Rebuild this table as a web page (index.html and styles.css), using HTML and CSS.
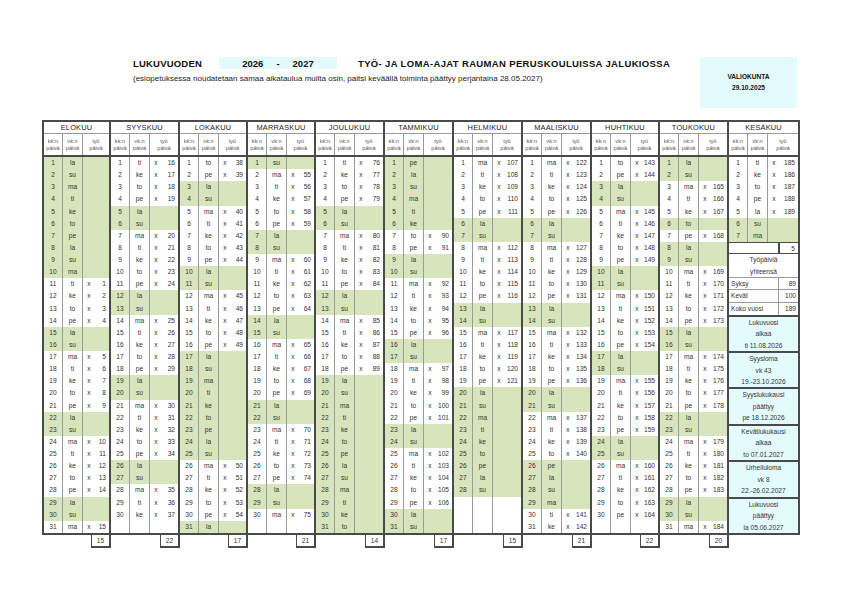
FILE: index.html
```html
<!DOCTYPE html>
<html lang="fi">
<head>
<meta charset="utf-8">
<title>Lukuvuosi 2026-2027</title>
<link rel="stylesheet" href="styles.css">
</head>
<body>
<div class="page">
  <div class="top">
    <div class="titles">
      <div class="l1">
        <span class="lbl">LUKUVUODEN</span>
        <span class="years"><span>2026</span><span>-</span><span>2027</span></span>
        <span class="ttl">TYÖ- JA LOMA-AJAT RAUMAN PERUSKOULUISSA JALUKIOSSA</span>
      </div>
      <div class="sub">(esiopetuksessa noudatetaan samaa aikataulua muilta osin, paitsi keväällä toiminta päättyy perjantaina 28.05.2027)</div>
    </div>
    <div class="valio"><span>VALIOKUNTA</span><span>29.10.2025</span></div>
  </div>

  <div class="cal">
    <!-- ELOKUU -->
    <div class="m"><div class="mi">
      <div class="mh">ELOKUU</div>
      <div class="sh"><i>kk:n<br>päivä</i><i>vk:n<br>päivä</i><i>työ<br>päivä</i></div>
      <div class="r g"><i>1</i><i>la</i></div>
      <div class="r g"><i>2</i><i>su</i></div>
      <div class="r g"><i>3</i><i>ma</i></div>
      <div class="r g"><i>4</i><i>ti</i></div>
      <div class="r g"><i>5</i><i>ke</i></div>
      <div class="r g"><i>6</i><i>to</i></div>
      <div class="r g"><i>7</i><i>pe</i></div>
      <div class="r g"><i>8</i><i>la</i></div>
      <div class="r g"><i>9</i><i>su</i></div>
      <div class="r g"><i>10</i><i>ma</i></div>
      <div class="r"><i>11</i><i>ti</i><i>x</i><i>1</i></div>
      <div class="r"><i>12</i><i>ke</i><i>x</i><i>2</i></div>
      <div class="r"><i>13</i><i>to</i><i>x</i><i>3</i></div>
      <div class="r"><i>14</i><i>pe</i><i>x</i><i>4</i></div>
      <div class="r g"><i>15</i><i>la</i></div>
      <div class="r g"><i>16</i><i>su</i></div>
      <div class="r"><i>17</i><i>ma</i><i>x</i><i>5</i></div>
      <div class="r"><i>18</i><i>ti</i><i>x</i><i>6</i></div>
      <div class="r"><i>19</i><i>ke</i><i>x</i><i>7</i></div>
      <div class="r"><i>20</i><i>to</i><i>x</i><i>8</i></div>
      <div class="r"><i>21</i><i>pe</i><i>x</i><i>9</i></div>
      <div class="r g"><i>22</i><i>la</i></div>
      <div class="r g"><i>23</i><i>su</i></div>
      <div class="r"><i>24</i><i>ma</i><i>x</i><i>10</i></div>
      <div class="r"><i>25</i><i>ti</i><i>x</i><i>11</i></div>
      <div class="r"><i>26</i><i>ke</i><i>x</i><i>12</i></div>
      <div class="r"><i>27</i><i>to</i><i>x</i><i>13</i></div>
      <div class="r"><i>28</i><i>pe</i><i>x</i><i>14</i></div>
      <div class="r g"><i>29</i><i>la</i></div>
      <div class="r g"><i>30</i><i>su</i></div>
      <div class="r"><i>31</i><i>ma</i><i>x</i><i>15</i></div>
    </div><div class="tot">15</div></div>

    <!-- SYYSKUU -->
    <div class="m"><div class="mi">
      <div class="mh">SYYSKUU</div>
      <div class="sh"><i>kk:n<br>päivä</i><i>vk:n<br>päivä</i><i>työ<br>päivä</i></div>
      <div class="r"><i>1</i><i>ti</i><i>x</i><i>16</i></div>
      <div class="r"><i>2</i><i>ke</i><i>x</i><i>17</i></div>
      <div class="r"><i>3</i><i>to</i><i>x</i><i>18</i></div>
      <div class="r"><i>4</i><i>pe</i><i>x</i><i>19</i></div>
      <div class="r g"><i>5</i><i>la</i></div>
      <div class="r g"><i>6</i><i>su</i></div>
      <div class="r"><i>7</i><i>ma</i><i>x</i><i>20</i></div>
      <div class="r"><i>8</i><i>ti</i><i>x</i><i>21</i></div>
      <div class="r"><i>9</i><i>ke</i><i>x</i><i>22</i></div>
      <div class="r"><i>10</i><i>to</i><i>x</i><i>23</i></div>
      <div class="r"><i>11</i><i>pe</i><i>x</i><i>24</i></div>
      <div class="r g"><i>12</i><i>la</i></div>
      <div class="r g"><i>13</i><i>su</i></div>
      <div class="r"><i>14</i><i>ma</i><i>x</i><i>25</i></div>
      <div class="r"><i>15</i><i>ti</i><i>x</i><i>26</i></div>
      <div class="r"><i>16</i><i>ke</i><i>x</i><i>27</i></div>
      <div class="r"><i>17</i><i>to</i><i>x</i><i>28</i></div>
      <div class="r"><i>18</i><i>pe</i><i>x</i><i>29</i></div>
      <div class="r g"><i>19</i><i>la</i></div>
      <div class="r g"><i>20</i><i>su</i></div>
      <div class="r"><i>21</i><i>ma</i><i>x</i><i>30</i></div>
      <div class="r"><i>22</i><i>ti</i><i>x</i><i>31</i></div>
      <div class="r"><i>23</i><i>ke</i><i>x</i><i>32</i></div>
      <div class="r"><i>24</i><i>to</i><i>x</i><i>33</i></div>
      <div class="r"><i>25</i><i>pe</i><i>x</i><i>34</i></div>
      <div class="r g"><i>26</i><i>la</i></div>
      <div class="r g"><i>27</i><i>su</i></div>
      <div class="r"><i>28</i><i>ma</i><i>x</i><i>35</i></div>
      <div class="r"><i>29</i><i>ti</i><i>x</i><i>36</i></div>
      <div class="r"><i>30</i><i>ke</i><i>x</i><i>37</i></div>
      <div class="r"><i></i><i></i></div>
    </div><div class="tot">22</div></div>

    <!-- LOKAKUU -->
    <div class="m"><div class="mi">
      <div class="mh">LOKAKUU</div>
      <div class="sh"><i>kk:n<br>päivä</i><i>vk:n<br>päivä</i><i>työ<br>päivä</i></div>
      <div class="r"><i>1</i><i>to</i><i>x</i><i>38</i></div>
      <div class="r"><i>2</i><i>pe</i><i>x</i><i>39</i></div>
      <div class="r g"><i>3</i><i>la</i></div>
      <div class="r g"><i>4</i><i>su</i></div>
      <div class="r"><i>5</i><i>ma</i><i>x</i><i>40</i></div>
      <div class="r"><i>6</i><i>ti</i><i>x</i><i>41</i></div>
      <div class="r"><i>7</i><i>ke</i><i>x</i><i>42</i></div>
      <div class="r"><i>8</i><i>to</i><i>x</i><i>43</i></div>
      <div class="r"><i>9</i><i>pe</i><i>x</i><i>44</i></div>
      <div class="r g"><i>10</i><i>la</i></div>
      <div class="r g"><i>11</i><i>su</i></div>
      <div class="r"><i>12</i><i>ma</i><i>x</i><i>45</i></div>
      <div class="r"><i>13</i><i>ti</i><i>x</i><i>46</i></div>
      <div class="r"><i>14</i><i>ke</i><i>x</i><i>47</i></div>
      <div class="r"><i>15</i><i>to</i><i>x</i><i>48</i></div>
      <div class="r"><i>16</i><i>pe</i><i>x</i><i>49</i></div>
      <div class="r g"><i>17</i><i>la</i></div>
      <div class="r g"><i>18</i><i>su</i></div>
      <div class="r g"><i>19</i><i>ma</i></div>
      <div class="r g"><i>20</i><i>ti</i></div>
      <div class="r g"><i>21</i><i>ke</i></div>
      <div class="r g"><i>22</i><i>to</i></div>
      <div class="r g"><i>23</i><i>pe</i></div>
      <div class="r g"><i>24</i><i>la</i></div>
      <div class="r g"><i>25</i><i>su</i></div>
      <div class="r"><i>26</i><i>ma</i><i>x</i><i>50</i></div>
      <div class="r"><i>27</i><i>ti</i><i>x</i><i>51</i></div>
      <div class="r"><i>28</i><i>ke</i><i>x</i><i>52</i></div>
      <div class="r"><i>29</i><i>to</i><i>x</i><i>53</i></div>
      <div class="r"><i>30</i><i>pe</i><i>x</i><i>54</i></div>
      <div class="r g"><i>31</i><i>la</i></div>
    </div><div class="tot">17</div></div>

    <!-- MARRASKUU -->
    <div class="m"><div class="mi">
      <div class="mh">MARRASKUU</div>
      <div class="sh"><i>kk:n<br>päivä</i><i>vk:n<br>päivä</i><i>työ<br>päivä</i></div>
      <div class="r g"><i>1</i><i>su</i></div>
      <div class="r"><i>2</i><i>ma</i><i>x</i><i>55</i></div>
      <div class="r"><i>3</i><i>ti</i><i>x</i><i>56</i></div>
      <div class="r"><i>4</i><i>ke</i><i>x</i><i>57</i></div>
      <div class="r"><i>5</i><i>to</i><i>x</i><i>58</i></div>
      <div class="r"><i>6</i><i>pe</i><i>x</i><i>59</i></div>
      <div class="r g"><i>7</i><i>la</i></div>
      <div class="r g"><i>8</i><i>su</i></div>
      <div class="r"><i>9</i><i>ma</i><i>x</i><i>60</i></div>
      <div class="r"><i>10</i><i>ti</i><i>x</i><i>61</i></div>
      <div class="r"><i>11</i><i>ke</i><i>x</i><i>62</i></div>
      <div class="r"><i>12</i><i>to</i><i>x</i><i>63</i></div>
      <div class="r"><i>13</i><i>pe</i><i>x</i><i>64</i></div>
      <div class="r g"><i>14</i><i>la</i></div>
      <div class="r g"><i>15</i><i>su</i></div>
      <div class="r"><i>16</i><i>ma</i><i>x</i><i>65</i></div>
      <div class="r"><i>17</i><i>ti</i><i>x</i><i>66</i></div>
      <div class="r"><i>18</i><i>ke</i><i>x</i><i>67</i></div>
      <div class="r"><i>19</i><i>to</i><i>x</i><i>68</i></div>
      <div class="r"><i>20</i><i>pe</i><i>x</i><i>69</i></div>
      <div class="r g"><i>21</i><i>la</i></div>
      <div class="r g"><i>22</i><i>su</i></div>
      <div class="r"><i>23</i><i>ma</i><i>x</i><i>70</i></div>
      <div class="r"><i>24</i><i>ti</i><i>x</i><i>71</i></div>
      <div class="r"><i>25</i><i>ke</i><i>x</i><i>72</i></div>
      <div class="r"><i>26</i><i>to</i><i>x</i><i>73</i></div>
      <div class="r"><i>27</i><i>pe</i><i>x</i><i>74</i></div>
      <div class="r g"><i>28</i><i>la</i></div>
      <div class="r g"><i>29</i><i>su</i></div>
      <div class="r"><i>30</i><i>ma</i><i>x</i><i>75</i></div>
      <div class="r"><i></i><i></i></div>
    </div><div class="tot">21</div></div>

    <!-- JOULUKUU -->
    <div class="m"><div class="mi">
      <div class="mh">JOULUKUU</div>
      <div class="sh"><i>kk:n<br>päivä</i><i>vk:n<br>päivä</i><i>työ<br>päivä</i></div>
      <div class="r"><i>1</i><i>ti</i><i>x</i><i>76</i></div>
      <div class="r"><i>2</i><i>ke</i><i>x</i><i>77</i></div>
      <div class="r"><i>3</i><i>to</i><i>x</i><i>78</i></div>
      <div class="r"><i>4</i><i>pe</i><i>x</i><i>79</i></div>
      <div class="r g"><i>5</i><i>la</i></div>
      <div class="r g"><i>6</i><i>su</i></div>
      <div class="r"><i>7</i><i>ma</i><i>x</i><i>80</i></div>
      <div class="r"><i>8</i><i>ti</i><i>x</i><i>81</i></div>
      <div class="r"><i>9</i><i>ke</i><i>x</i><i>82</i></div>
      <div class="r"><i>10</i><i>to</i><i>x</i><i>83</i></div>
      <div class="r"><i>11</i><i>pe</i><i>x</i><i>84</i></div>
      <div class="r g"><i>12</i><i>la</i></div>
      <div class="r g"><i>13</i><i>su</i></div>
      <div class="r"><i>14</i><i>ma</i><i>x</i><i>85</i></div>
      <div class="r"><i>15</i><i>ti</i><i>x</i><i>86</i></div>
      <div class="r"><i>16</i><i>ke</i><i>x</i><i>87</i></div>
      <div class="r"><i>17</i><i>to</i><i>x</i><i>88</i></div>
      <div class="r"><i>18</i><i>pe</i><i>x</i><i>89</i></div>
      <div class="r g"><i>19</i><i>la</i></div>
      <div class="r g"><i>20</i><i>su</i></div>
      <div class="r g"><i>21</i><i>ma</i></div>
      <div class="r g"><i>22</i><i>ti</i></div>
      <div class="r g"><i>23</i><i>ke</i></div>
      <div class="r g"><i>24</i><i>to</i></div>
      <div class="r g"><i>25</i><i>pe</i></div>
      <div class="r g"><i>26</i><i>la</i></div>
      <div class="r g"><i>27</i><i>su</i></div>
      <div class="r g"><i>28</i><i>ma</i></div>
      <div class="r g"><i>29</i><i>ti</i></div>
      <div class="r g"><i>30</i><i>ke</i></div>
      <div class="r g"><i>31</i><i>to</i></div>
    </div><div class="tot">14</div></div>

    <!-- TAMMIKUU -->
    <div class="m"><div class="mi">
      <div class="mh">TAMMIKUU</div>
      <div class="sh"><i>kk:n<br>päivä</i><i>vk:n<br>päivä</i><i>työ<br>päivä</i></div>
      <div class="r g"><i>1</i><i>pe</i></div>
      <div class="r g"><i>2</i><i>la</i></div>
      <div class="r g"><i>3</i><i>su</i></div>
      <div class="r g"><i>4</i><i>ma</i></div>
      <div class="r g"><i>5</i><i>ti</i></div>
      <div class="r g"><i>6</i><i>ke</i></div>
      <div class="r"><i>7</i><i>to</i><i>x</i><i>90</i></div>
      <div class="r"><i>8</i><i>pe</i><i>x</i><i>91</i></div>
      <div class="r g"><i>9</i><i>la</i></div>
      <div class="r g"><i>10</i><i>su</i></div>
      <div class="r"><i>11</i><i>ma</i><i>x</i><i>92</i></div>
      <div class="r"><i>12</i><i>ti</i><i>x</i><i>93</i></div>
      <div class="r"><i>13</i><i>ke</i><i>x</i><i>94</i></div>
      <div class="r"><i>14</i><i>to</i><i>x</i><i>95</i></div>
      <div class="r"><i>15</i><i>pe</i><i>x</i><i>96</i></div>
      <div class="r g"><i>16</i><i>la</i></div>
      <div class="r g"><i>17</i><i>su</i></div>
      <div class="r"><i>18</i><i>ma</i><i>x</i><i>97</i></div>
      <div class="r"><i>19</i><i>ti</i><i>x</i><i>98</i></div>
      <div class="r"><i>20</i><i>ke</i><i>x</i><i>99</i></div>
      <div class="r"><i>21</i><i>to</i><i>x</i><i>100</i></div>
      <div class="r"><i>22</i><i>pe</i><i>x</i><i>101</i></div>
      <div class="r g"><i>23</i><i>la</i></div>
      <div class="r g"><i>24</i><i>su</i></div>
      <div class="r"><i>25</i><i>ma</i><i>x</i><i>102</i></div>
      <div class="r"><i>26</i><i>ti</i><i>x</i><i>103</i></div>
      <div class="r"><i>27</i><i>ke</i><i>x</i><i>104</i></div>
      <div class="r"><i>28</i><i>to</i><i>x</i><i>105</i></div>
      <div class="r"><i>29</i><i>pe</i><i>x</i><i>106</i></div>
      <div class="r g"><i>30</i><i>la</i></div>
      <div class="r g"><i>31</i><i>su</i></div>
    </div><div class="tot">17</div></div>

    <!-- HELMIKUU -->
    <div class="m"><div class="mi">
      <div class="mh">HELMIKUU</div>
      <div class="sh"><i>kk:n<br>päivä</i><i>vk:n<br>päivä</i><i>työ<br>päivä</i></div>
      <div class="r"><i>1</i><i>ma</i><i>x</i><i>107</i></div>
      <div class="r"><i>2</i><i>ti</i><i>x</i><i>108</i></div>
      <div class="r"><i>3</i><i>ke</i><i>x</i><i>109</i></div>
      <div class="r"><i>4</i><i>to</i><i>x</i><i>110</i></div>
      <div class="r"><i>5</i><i>pe</i><i>x</i><i>111</i></div>
      <div class="r g"><i>6</i><i>la</i></div>
      <div class="r g"><i>7</i><i>su</i></div>
      <div class="r"><i>8</i><i>ma</i><i>x</i><i>112</i></div>
      <div class="r"><i>9</i><i>ti</i><i>x</i><i>113</i></div>
      <div class="r"><i>10</i><i>ke</i><i>x</i><i>114</i></div>
      <div class="r"><i>11</i><i>to</i><i>x</i><i>115</i></div>
      <div class="r"><i>12</i><i>pe</i><i>x</i><i>116</i></div>
      <div class="r g"><i>13</i><i>la</i></div>
      <div class="r g"><i>14</i><i>su</i></div>
      <div class="r"><i>15</i><i>ma</i><i>x</i><i>117</i></div>
      <div class="r"><i>16</i><i>ti</i><i>x</i><i>118</i></div>
      <div class="r"><i>17</i><i>ke</i><i>x</i><i>119</i></div>
      <div class="r"><i>18</i><i>to</i><i>x</i><i>120</i></div>
      <div class="r"><i>19</i><i>pe</i><i>x</i><i>121</i></div>
      <div class="r g"><i>20</i><i>la</i></div>
      <div class="r g"><i>21</i><i>su</i></div>
      <div class="r g"><i>22</i><i>ma</i></div>
      <div class="r g"><i>23</i><i>ti</i></div>
      <div class="r g"><i>24</i><i>ke</i></div>
      <div class="r g"><i>25</i><i>to</i></div>
      <div class="r g"><i>26</i><i>pe</i></div>
      <div class="r g"><i>27</i><i>la</i></div>
      <div class="r g"><i>28</i><i>su</i></div>
      <div class="r"><i></i><i></i></div>
      <div class="r"><i></i><i></i></div>
      <div class="r"><i></i><i></i></div>
    </div><div class="tot">15</div></div>

    <!-- MAALISKUU -->
    <div class="m"><div class="mi">
      <div class="mh">MAALISKUU</div>
      <div class="sh"><i>kk:n<br>päivä</i><i>vk:n<br>päivä</i><i>työ<br>päivä</i></div>
      <div class="r"><i>1</i><i>ma</i><i>x</i><i>122</i></div>
      <div class="r"><i>2</i><i>ti</i><i>x</i><i>123</i></div>
      <div class="r"><i>3</i><i>ke</i><i>x</i><i>124</i></div>
      <div class="r"><i>4</i><i>to</i><i>x</i><i>125</i></div>
      <div class="r"><i>5</i><i>pe</i><i>x</i><i>126</i></div>
      <div class="r g"><i>6</i><i>la</i></div>
      <div class="r g"><i>7</i><i>su</i></div>
      <div class="r"><i>8</i><i>ma</i><i>x</i><i>127</i></div>
      <div class="r"><i>9</i><i>ti</i><i>x</i><i>128</i></div>
      <div class="r"><i>10</i><i>ke</i><i>x</i><i>129</i></div>
      <div class="r"><i>11</i><i>to</i><i>x</i><i>130</i></div>
      <div class="r"><i>12</i><i>pe</i><i>x</i><i>131</i></div>
      <div class="r g"><i>13</i><i>la</i></div>
      <div class="r g"><i>14</i><i>su</i></div>
      <div class="r"><i>15</i><i>ma</i><i>x</i><i>132</i></div>
      <div class="r"><i>16</i><i>ti</i><i>x</i><i>133</i></div>
      <div class="r"><i>17</i><i>ke</i><i>x</i><i>134</i></div>
      <div class="r"><i>18</i><i>to</i><i>x</i><i>135</i></div>
      <div class="r"><i>19</i><i>pe</i><i>x</i><i>136</i></div>
      <div class="r g"><i>20</i><i>la</i></div>
      <div class="r g"><i>21</i><i>su</i></div>
      <div class="r"><i>22</i><i>ma</i><i>x</i><i>137</i></div>
      <div class="r"><i>23</i><i>ti</i><i>x</i><i>138</i></div>
      <div class="r"><i>24</i><i>ke</i><i>x</i><i>139</i></div>
      <div class="r"><i>25</i><i>to</i><i>x</i><i>140</i></div>
      <div class="r g"><i>26</i><i>pe</i></div>
      <div class="r g"><i>27</i><i>la</i></div>
      <div class="r g"><i>28</i><i>su</i></div>
      <div class="r g"><i>29</i><i>ma</i></div>
      <div class="r"><i>30</i><i>ti</i><i>x</i><i>141</i></div>
      <div class="r"><i>31</i><i>ke</i><i>x</i><i>142</i></div>
    </div><div class="tot">21</div></div>

    <!-- HUHTIKUU -->
    <div class="m"><div class="mi">
      <div class="mh">HUHTIKUU</div>
      <div class="sh"><i>kk:n<br>päivä</i><i>vk:n<br>päivä</i><i>työ<br>päivä</i></div>
      <div class="r"><i>1</i><i>to</i><i>x</i><i>143</i></div>
      <div class="r"><i>2</i><i>pe</i><i>x</i><i>144</i></div>
      <div class="r g"><i>3</i><i>la</i></div>
      <div class="r g"><i>4</i><i>su</i></div>
      <div class="r"><i>5</i><i>ma</i><i>x</i><i>145</i></div>
      <div class="r"><i>6</i><i>ti</i><i>x</i><i>146</i></div>
      <div class="r"><i>7</i><i>ke</i><i>x</i><i>147</i></div>
      <div class="r"><i>8</i><i>to</i><i>x</i><i>148</i></div>
      <div class="r"><i>9</i><i>pe</i><i>x</i><i>149</i></div>
      <div class="r g"><i>10</i><i>la</i></div>
      <div class="r g"><i>11</i><i>su</i></div>
      <div class="r"><i>12</i><i>ma</i><i>x</i><i>150</i></div>
      <div class="r"><i>13</i><i>ti</i><i>x</i><i>151</i></div>
      <div class="r"><i>14</i><i>ke</i><i>x</i><i>152</i></div>
      <div class="r"><i>15</i><i>to</i><i>x</i><i>153</i></div>
      <div class="r"><i>16</i><i>pe</i><i>x</i><i>154</i></div>
      <div class="r g"><i>17</i><i>la</i></div>
      <div class="r g"><i>18</i><i>su</i></div>
      <div class="r"><i>19</i><i>ma</i><i>x</i><i>155</i></div>
      <div class="r"><i>20</i><i>ti</i><i>x</i><i>156</i></div>
      <div class="r"><i>21</i><i>ke</i><i>x</i><i>157</i></div>
      <div class="r"><i>22</i><i>to</i><i>x</i><i>158</i></div>
      <div class="r"><i>23</i><i>pe</i><i>x</i><i>159</i></div>
      <div class="r g"><i>24</i><i>la</i></div>
      <div class="r g"><i>25</i><i>su</i></div>
      <div class="r"><i>26</i><i>ma</i><i>x</i><i>160</i></div>
      <div class="r"><i>27</i><i>ti</i><i>x</i><i>161</i></div>
      <div class="r"><i>28</i><i>ke</i><i>x</i><i>162</i></div>
      <div class="r"><i>29</i><i>to</i><i>x</i><i>163</i></div>
      <div class="r"><i>30</i><i>pe</i><i>x</i><i>164</i></div>
      <div class="r"><i></i><i></i></div>
    </div><div class="tot">22</div></div>

    <!-- TOUKOKUU -->
    <div class="m"><div class="mi">
      <div class="mh">TOUKOKUU</div>
      <div class="sh"><i>kk:n<br>päivä</i><i>vk:n<br>päivä</i><i>työ<br>päivä</i></div>
      <div class="r g"><i>1</i><i>la</i></div>
      <div class="r g"><i>2</i><i>su</i></div>
      <div class="r"><i>3</i><i>ma</i><i>x</i><i>165</i></div>
      <div class="r"><i>4</i><i>ti</i><i>x</i><i>166</i></div>
      <div class="r"><i>5</i><i>ke</i><i>x</i><i>167</i></div>
      <div class="r g"><i>6</i><i>to</i></div>
      <div class="r"><i>7</i><i>pe</i><i>x</i><i>168</i></div>
      <div class="r g"><i>8</i><i>la</i></div>
      <div class="r g"><i>9</i><i>su</i></div>
      <div class="r"><i>10</i><i>ma</i><i>x</i><i>169</i></div>
      <div class="r"><i>11</i><i>ti</i><i>x</i><i>170</i></div>
      <div class="r"><i>12</i><i>ke</i><i>x</i><i>171</i></div>
      <div class="r"><i>13</i><i>to</i><i>x</i><i>172</i></div>
      <div class="r"><i>14</i><i>pe</i><i>x</i><i>173</i></div>
      <div class="r g"><i>15</i><i>la</i></div>
      <div class="r g"><i>16</i><i>su</i></div>
      <div class="r"><i>17</i><i>ma</i><i>x</i><i>174</i></div>
      <div class="r"><i>18</i><i>ti</i><i>x</i><i>175</i></div>
      <div class="r"><i>19</i><i>ke</i><i>x</i><i>176</i></div>
      <div class="r"><i>20</i><i>to</i><i>x</i><i>177</i></div>
      <div class="r"><i>21</i><i>pe</i><i>x</i><i>178</i></div>
      <div class="r g"><i>22</i><i>la</i></div>
      <div class="r g"><i>23</i><i>su</i></div>
      <div class="r"><i>24</i><i>ma</i><i>x</i><i>179</i></div>
      <div class="r"><i>25</i><i>ti</i><i>x</i><i>180</i></div>
      <div class="r"><i>26</i><i>ke</i><i>x</i><i>181</i></div>
      <div class="r"><i>27</i><i>to</i><i>x</i><i>182</i></div>
      <div class="r"><i>28</i><i>pe</i><i>x</i><i>183</i></div>
      <div class="r g"><i>29</i><i>la</i></div>
      <div class="r g"><i>30</i><i>su</i></div>
      <div class="r"><i>31</i><i>ma</i><i>x</i><i>184</i></div>
    </div><div class="tot">20</div></div>

    <!-- KESÄKUU -->
    <div class="m"><div class="mi">
      <div class="mh">KESÄKUU</div>
      <div class="sh"><i>kk:n<br>päivä</i><i>vk:n<br>päivä</i><i>työ<br>päivä</i></div>
      <div class="r"><i>1</i><i>ti</i><i>x</i><i>185</i></div>
      <div class="r"><i>2</i><i>ke</i><i>x</i><i>186</i></div>
      <div class="r"><i>3</i><i>to</i><i>x</i><i>187</i></div>
      <div class="r"><i>4</i><i>pe</i><i>x</i><i>188</i></div>
      <div class="r"><i>5</i><i>la</i><i>x</i><i>189</i></div>
      <div class="r g"><i>6</i><i>su</i></div>
      <div class="r g"><i>7</i><i>ma</i></div>
      <div class="sum"><span></span><span class="v">5</span></div>
      <div class="tp">Työpäiviä<br>yhteensä</div>
      <div class="kv"><span>Syksy</span><span class="v">89</span></div>
      <div class="kv"><span>Kevät</span><span class="v">100</span></div>
      <div class="kv last"><span>Koko vuosi</span><span class="v">189</span></div>
      <div class="info">Lukuvuosi<br>alkaa<br>ti 11.08.2026</div>
      <div class="info">Syysloma<br>vk 43<br>19.-23.10.2026</div>
      <div class="info">Syyslukukausi<br>päättyy<br>pe 18.12.2026</div>
      <div class="info">Kevätlukukausi<br>alkaa<br>to 07.01.2027</div>
      <div class="info">Urheiluloma<br>vk 8<br>22.-26.02.2027</div>
      <div class="info">Lukuvuosi<br>päättyy<br>la 05.06.2027</div>
    </div></div>
  </div>
</div>
</body>
</html>
```
FILE: styles.css
```css
* { box-sizing: border-box; }

body {
  margin: 0;
  background: #fff;
  color: #2a2a2a;
  font-family: "Liberation Sans", Arial, sans-serif;
}

.page {
  width: 800px;
  padding: 57px 0 0 42px;
}

/* ---------- heading ---------- */
.top {
  display: flex;
  height: 51px;
}

.titles {
  margin-left: 91px;
}

.l1 {
  display: flex;
  align-items: center;
  height: 12px;
  font-weight: bold;
  font-size: 9.5px;
  color: #111;
}

.lbl {
  width: 86px;
  letter-spacing: 0.2px;
}

.years {
  width: 118px;
  height: 12px;
  background: #e4fbfd;
  display: flex;
  justify-content: center;
  align-items: center;
  gap: 13px;
}

.ttl {
  margin-left: 21px;
  letter-spacing: 0.35px;
}

.sub {
  margin-top: 5px;
  font-size: 8px;
  color: #222;
}

.valio {
  margin-left: auto;
  margin-right: 3px;
  width: 97px;
  height: 51px;
  background: #e4fbfd;
  display: flex;
  flex-direction: column;
  justify-content: center;
  align-items: center;
  font-weight: bold;
  font-size: 6.6px;
  line-height: 11px;
  color: #111;
  padding-bottom: 2px;
}

/* ---------- calendar ---------- */
.cal {
  display: flex;
  margin-top: 12px;
}

.m {
  width: 69px;
  flex: none;
  display: flex;
  flex-direction: column;
}
.m:nth-child(3), .m:nth-child(4), .m:nth-child(9) { width: 68px; }
.m:last-child { width: 71px; }

.mi {
  border-top: 2px solid #4a4a4a;
  border-right: 2px solid #4a4a4a;
  border-bottom: 2px solid #4a4a4a;
}
.m:first-child .mi { border-left: 2px solid #4a4a4a; }

.mh {
  height: 12px;
  line-height: 11px;
  text-align: center;
  font-size: 7.4px;
  letter-spacing: 0.2px;
  border-bottom: 1px solid #9a9a9a;
  color: #222;
}

.sh {
  display: grid;
  grid-template-columns: 19px 20px 1fr;
  height: 23px;
  border-bottom: 2px solid #4a4a4a;
  font-size: 5.6px;
  line-height: 7px;
  color: #555;
}
.sh i {
  font-style: normal;
  display: flex;
  align-items: center;
  justify-content: center;
  text-align: center;
}
.sh i:nth-child(-n+2) { border-right: 1px solid #9a9a9a; }

.r {
  display: grid;
  grid-template-columns: 19px 20px 12px 1fr;
  height: 12.13px;
  line-height: 12px;
  font-size: 6.6px;
  color: #333;
}
.r i {
  font-style: normal;
  text-align: center;
  white-space: nowrap;
}
.r i:nth-child(-n+2) { border-right: 1px solid #9a9a9a; }
.r i:nth-child(4) {
  text-align: right;
  padding-right: 3px;
}
.g { background: #d8e4bc; }

.tot {
  align-self: flex-end;
  width: 20px;
  height: 13px;
  border-style: solid;
  border-color: #4a4a4a;
  border-width: 0 2px 2px 1px;
  font-size: 6.6px;
  line-height: 11px;
  text-align: center;
  color: #333;
}

/* ---------- summary panel ---------- */
.sum, .kv {
  display: grid;
  grid-template-columns: 1fr 20px;
  height: 12.13px;
  font-size: 6.6px;
  line-height: 11px;
  color: #333;
}
.sum {
  border-top: 1px solid #4a4a4a;
  border-bottom: 1px solid #4a4a4a;
}
.sum .v {
  border-left: 2px solid #4a4a4a;
  text-align: right;
  padding-right: 3px;
}

.tp {
  height: 24.26px;
  text-align: center;
  font-size: 6.6px;
  line-height: 12.13px;
  color: #333;
  border-bottom: 1px solid #9a9a9a;
}

.kv { border-bottom: 1px solid #9a9a9a; }
.kv.last { border-bottom: 0; }
.kv span:first-child { padding-left: 2px; }
.kv .v {
  border-left: 1px solid #9a9a9a;
  text-align: right;
  padding-right: 2px;
}

.info {
  height: 36.39px;
  background: #e4fbfd;
  border-top: 2px solid #4a4a4a;
  text-align: center;
  font-size: 6.6px;
  line-height: 11.5px;
  color: #333;
}
```
